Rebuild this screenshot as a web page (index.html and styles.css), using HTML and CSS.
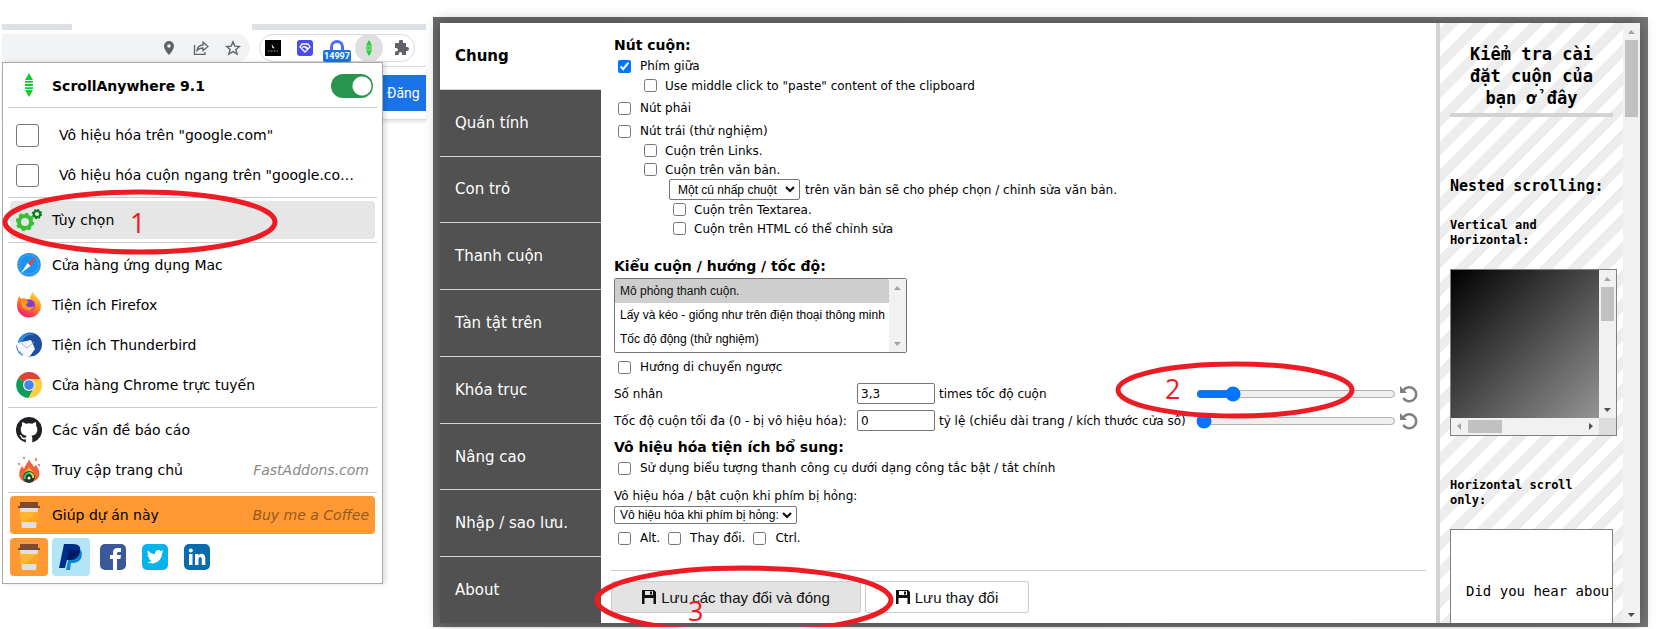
FILE: index.html
```html
<!DOCTYPE html>
<html lang="vi">
<head>
    <meta charset="UTF-8">
    <meta name="viewport" content="width=device-width, initial-scale=1.0">
    <title>ScrollAnywhere</title>
    <link rel="stylesheet" href="styles.css">
</head>
<body>
    <div class="browser">
        <div class="tab-strip"></div>
        <div class="toolbar">
            <div class="address-bar">
                <svg width="16" height="16" viewBox="0 0 16 16"><path fill="#5f6368" fill-rule="evenodd" d="M8 1a5 5 0 0 0-5 5c0 3.700 5 9 5 9s5-5.300 5-9a5 5 0 0 0-5-5zm0 3.200a1.800 1.800 0 1 1 0 3.600 1.800 1.800 0 0 1 0-3.600z"/></svg>
                <svg width="16" height="16" viewBox="0 0 16 16" fill="none" stroke="#5f6368" stroke-width="1.300"><path d="M1.500 5v9.300H12V12M4 10.500C4.500 7 6.500 5.200 10 5V2.200L15 6.500l-5 4.200V8C7.500 8 5.500 8.800 4 10.500z"/></svg>
                <svg width="16" height="16" viewBox="0 0 16 16" fill="none" stroke="#5f6368" stroke-width="1.400"><path d="M8 1.800l1.800 4.300 4.600.4-3.500 3 1.100 4.600L8 11.600l-4 2.500 1.100-4.600-3.500-3 4.600-.4z"/></svg>
            </div>
            <div class="extensions">
                <svg width="16" height="16" viewBox="0 0 16 16"><path d="M0 0h16v16H0z"/><path fill="#fff" d="M6.500 4l3.200 4.500-2.200-.5z"/><path stroke="#999" stroke-dasharray="1 .5" d="M3 11h10"/></svg>
                <svg width="16" height="16" viewBox="0 0 16 16"><rect width="16" height="16" rx="3" fill="#4b4de8"/><path fill="none" stroke="#fff" stroke-width="1.300" d="M5 4h6l2 3-5 5-5-5zM5 7.500l2-1 3.500 2.500M8 6.500l3 2"/></svg>
                <span class="counter">
                    <svg width="16" height="16" viewBox="0 0 16 16"><path fill="none" stroke="#4b6bfb" stroke-width="3" d="M2.500 10V7a5.500 5.500 0 0 1 11 0v3"/></svg>
                    <span class="badge">14997</span>
                </span>
                <span class="ext-active"><svg width="10" height="16" viewBox="0 0 10 24"><use href="#arrows"/></svg></span>
                <svg width="16" height="16" viewBox="0 0 16 16"><path fill="#5f6368" d="M6 1.500a2 2 0 0 1 4 0V3h3v4h1a2 2 0 0 1 0 4h-1v4H9v-1.500a1.600 1.600 0 0 0-3.200 0V15H2v-3.500h1.200a1.700 1.700 0 0 0 0-3.400H2V3h4z"/></svg>
            </div>
        </div>
        <div class="web-page"><a class="sign-in" href="#">Đăng</a></div>

        <div class="popup">
            <div class="popup-header">
                <svg class="icon" viewBox="-8 0 26 26"><g id="arrows" fill="#12cd2a"><path d="M5 0l4 7H1zM5 24l4-7H1zM1 8h8v1.800H1zM1 11h8v2H1zM1 14.200h8V16H1z"/></g></svg>
                <label for="enabled">ScrollAnywhere 9.1</label>
                <input class="switch" type="checkbox" id="enabled" checked>
            </div>
            <hr>
            <label class="item item-check first"><input type="checkbox"><span>Vô hiệu hóa trên "google.com"</span></label>
            <label class="item item-check"><input type="checkbox"><span>Vô hiệu hóa cuộn ngang trên "google.co…</span></label>
            <hr>
            <a class="item hover" href="#">
                <svg class="icon" viewBox="0 0 26 26"><circle cx="9" cy="15" r="6" fill="none" stroke="#35c135" stroke-width="4"/><circle cx="9" cy="15" r="8" fill="none" stroke="#35c135" stroke-width="2.500" stroke-dasharray="3.200 3.080"/><circle cx="21" cy="7" r="3.200" fill="none" stroke="#0c7d1d" stroke-width="2.200"/><circle cx="21" cy="7" r="4.400" fill="none" stroke="#0c7d1d" stroke-width="1.500" stroke-dasharray="1.800 1.650"/></svg>
                <span>Tùy chọn</span>
            </a>
            <hr>
            <a class="item" href="#">
                <svg class="icon" viewBox="0 0 26 26"><circle cx="13" cy="13" r="12" fill="#b9bcc0"/><circle cx="13" cy="12.500" r="11.500" fill="#1a94f0"/><circle cx="13" cy="12.500" r="9.500" fill="none" stroke="#7fd0ff" stroke-dasharray="1 1.500"/><path fill="#e8453c" d="M21 4l-6.500 10-3-3z"/><path fill="#fff" d="M5 21l6.500-10 3 3z"/></svg>
                <span>Cửa hàng ứng dụng Mac</span>
            </a>
            <a class="item" href="#">
                <svg class="icon" viewBox="0 0 26 26"><defs><linearGradient id="fox" x1="0.8" y1="0" x2="0.3" y2="1"><stop offset="0" stop-color="#ffe13f"/><stop offset=".45" stop-color="#ff8a1f"/><stop offset="1" stop-color="#f5156c"/></linearGradient></defs><path fill="url(#fox)" d="M3 4l2 3 3-1 2 1 4 0c0-3 1-5 3-7 1 4 7 6 8 13a12 12 0 0 1-24 1C1 10 2 7 3 4z"/><circle cx="13.500" cy="13" r="5.500" fill="#7a3fd8"/><path fill="#ff9a1f" d="M5 9c3-1 6 0 8 1l-3 2c0 4 5 4 8 2-2 7-13 6-13-5z"/></svg>
                <span>Tiện ích Firefox</span>
            </a>
            <a class="item" href="#">
                <svg class="icon" viewBox="0 0 26 26"><circle cx="14" cy="12.500" r="12" fill="#1c4fa0"/><path fill="#2b8ee0" d="M2 11C3 3 12-1 19 3c-7-1-12 2-13 8z"/><path fill="#f4f6fa" d="M1 11l14-3 4 9-5 7c-6 2-13-3-13-13z"/><path fill="none" stroke="#a9b8cc" d="M5 11l6 5 7-6"/><path fill="#3b7dd8" d="M0 12c0 7 3 10 7 12l-1-3-1 1-1-3-1 1z"/></svg>
                <span>Tiện ích Thunderbird</span>
            </a>
            <a class="item" href="#">
                <svg class="icon" viewBox="0 0 26 26"><path fill="#db4437" d="M13 13L2.200 6A13 13 0 0 1 24.600 7H13z"/><path fill="#0f9d58" d="M13 13L2.200 6A13 13 0 0 0 12.500 26L18 16z"/><path fill="#ffcd40" d="M13 13V7h11.600A13 13 0 0 1 12.500 26L18 16z"/><circle cx="13" cy="13" r="6" fill="#f1f1f1"/><circle cx="13" cy="13" r="4.800" fill="#4285f4"/></svg>
                <span>Cửa hàng Chrome trực tuyến</span>
            </a>
            <hr>
            <a class="item" href="#">
                <svg class="icon" viewBox="0 0 16 16"><path fill="#1f2023" d="M8 0a8 8 0 0 0-2.530 15.590c.4.070.55-.17.55-.38v-1.490c-2.010.37-2.530-.49-2.690-.94-.09-.23-.48-.94-.82-1.130-.28-.15-.68-.52-.01-.53.63-.01 1.080.58 1.230.82.72 1.210 1.870.87 2.330.66.070-.52.280-.87.510-1.070-1.780-.2-3.640-.89-3.640-3.950 0-.87.310-1.590.820-2.150-.08-.2-.36-1.020.080-2.120 0 0 .67-.21 2.200.82a7.400 7.400 0 0 1 4 0c1.530-1.040 2.200-.82 2.200-.82.44 1.100.16 1.920.080 2.120.51.560.82 1.270.82 2.150 0 3.070-1.870 3.750-3.650 3.950.29.250.54.730.54 1.480v2.200c0 .21.150.46.550.38A8 8 0 0 0 8 0z"/></svg>
                <span>Các vấn đề báo cáo</span>
            </a>
            <a class="item" href="#">
                <svg class="icon" viewBox="0 0 26 26"><path fill="#f0623a" d="M13 2c1 4 4 5 5 8l2-2c3 5 5 9 2 13-3 5-15 6-18 0-2-4 0-9 2-12l2 3c1-4 4-6 5-10z"/><path fill="#ffb43d" d="M13 10c3 4 7 6 6 11H7c-1-5 4-7 6-11z"/><path stroke="#f0623a" stroke-width="1.500" d="M8 0v2M20 1v3M3 6v2M23 7v2"/><circle cx="13" cy="20" r="6" fill="#24382f"/><path fill="none" stroke="#27d06a" stroke-width="2" d="M9 22a4.500 4.500 0 0 1 5-6"/><path fill="none" stroke="#e8d23a" stroke-width="2" d="M14 16a4.500 4.500 0 0 1 3 5"/><circle cx="13" cy="21" r="1.500" fill="#fff"/></svg>
                <span>Truy cập trang chủ</span><em>FastAddons.com</em>
            </a>
            <hr>
            <a class="item donate" href="#">
                <svg class="icon" viewBox="0 0 26 26"><g id="cup"><path fill="#7b4a33" d="M4 0h18v4h2v2H2V4h2z"/><path fill="#e0e0e0" d="M4 6h18l-2 20H6z"/><path fill="#ffb62e" d="M4 10h18l-1 10H5z"/><path fill="#ffa424" d="M22 10L8 20h13z"/></g></svg>
                <span>Giúp dự án này</span><em>Buy me a Coffee</em>
            </a>
            <div class="social">
                <a class="coffee" href="#" aria-label="Coffee"><svg class="icon" viewBox="0 0 26 26"><use href="#cup"/></svg></a>
                <a class="paypal" href="#" aria-label="PayPal"><svg class="icon" viewBox="0 0 26 26"><path fill="#0f85d0" d="M8 26l3-14 12-6c3 8-2 13-8 13h-2l-1 7z"/><path fill="#002c8a" d="M6 0h9c6 0 8 3 7 7s-4 9-10 9H9l-2 8H1z"/><path fill="#001b66" d="M11 6h11c0 6-4 10-10 10H9z"/></svg></a>
                <a href="#" aria-label="Facebook"><svg class="icon" viewBox="0 0 26 26"><rect width="26" height="26" rx="5" fill="#3b5998"/><path fill="#fff" d="M13 26V15h-3v-4h3V9c0-4 2-5 5-5h3v4h-2c-1.500 0-2 .5-2 2v1h4l-.6 4H17v11z"/></svg></a>
                <a href="#" aria-label="Twitter"><svg class="icon" viewBox="0 0 26 26"><rect width="26" height="26" rx="5" fill="#08b3ec"/><path fill="#fff" d="M5 18c2 .2 3.500-.3 5-1.300-1.700-.2-2.700-1-3.200-2.400h1.400C6.500 13.800 5.600 12.500 5.500 11l1.500.4C5.400 10 5 8.300 6 6.600c2 2.300 4.200 3.500 7 3.700-.5-4 3.500-5.600 6-3.400L21.200 6l-1.300 2 1.800-.5L20 9.300C20 17 12 22 5 18z"/></svg></a>
                <a href="#" aria-label="LinkedIn"><svg class="icon" viewBox="0 0 26 26"><rect width="26" height="26" rx="5" fill="#0a6cac"/><path fill="#fff" d="M5 10h3.500v11H5zM11 10h3.300v1.600c2-3 7-2.200 7 2.600V21h-3.500v-6c0-3-3.300-2.700-3.300.2V21H11z"/><circle cx="6.800" cy="6.500" r="2" fill="#fff"/></svg></a>
            </div>
        </div>
    </div>

    <div class="backdrop">
        <div class="options">
            <nav class="tabs">
                <a class="active" href="#">Chung</a>
                <a href="#">Quán tính</a>
                <a href="#">Con trỏ</a>
                <a href="#">Thanh cuộn</a>
                <a href="#">Tàn tật trên</a>
                <a href="#">Khóa trục</a>
                <a href="#">Nâng cao</a>
                <a href="#">Nhập / sao lưu.</a>
                <a href="#">About</a>
            </nav>

            <main class="settings">
                <h2>Nút cuộn:</h2>
                <div class="group">
                    <label class="row"><input type="checkbox" checked>Phím giữa</label>
                    <label class="row sub"><input type="checkbox">Use middle click to "paste" content of the clipboard</label>
                </div>
                <div class="group">
                    <label class="row"><input type="checkbox">Nút phải</label>
                </div>
                <div class="group">
                    <label class="row"><input type="checkbox">Nút trái (thử nghiệm)</label>
                    <label class="row sub"><input type="checkbox">Cuộn trên Links.</label>
                    <label class="row sub"><input type="checkbox">Cuộn trên văn bản.</label>
                    <div class="click-row">
                        <span class="dropdown"><select id="clicks"><option>Một cú nhấp chuột</option></select><svg width="10" height="7" viewBox="0 0 10 7"><use href="#chevron"/></svg></span>
                        <label for="clicks">trên văn bản sẽ cho phép chọn / chỉnh sửa văn bản.</label>
                    </div>
                    <label class="row sub sub-2"><input type="checkbox">Cuộn trên Textarea.</label>
                    <label class="row sub sub-2"><input type="checkbox">Cuộn trên HTML có thể chỉnh sửa</label>
                </div>

                <h2 class="spaced">Kiểu cuộn / hướng / tốc độ:</h2>
                <div class="list-box">
                    <select size="3" aria-label="Kiểu cuộn">
                        <option selected>Mô phỏng thanh cuộn.</option>
                        <option>Lấy và kéo - giống như trên điện thoại thông minh</option>
                        <option>Tốc độ động (thử nghiệm)</option>
                    </select>
                    <div class="scrollbar disabled"><i class="up"></i><i class="down"></i></div>
                </div>
                <label class="row reverse"><input type="checkbox">Hướng di chuyển ngược</label>
                <div class="speed">
                    <label for="multiplier">Số nhân</label>
                    <input type="text" id="multiplier" value="3,3">
                    <span>times tốc độ cuộn</span>
                    <input type="range" min="0" max="100" value="16" aria-label="Số nhân">
                    <button class="reset" aria-label="Reset"><svg width="18" height="18" viewBox="0 0 18 18"><g id="undo"><path fill="none" stroke="#808080" stroke-width="2.600" d="M3.500 5.200A7 7 0 1 1 3.300 13"/><path fill="#808080" d="M0 1v7h7z"/></g></svg></button>
                </div>
                <div class="speed">
                    <label for="maximum">Tốc độ cuộn tối đa (0 - bị vô hiệu hóa):</label>
                    <input type="text" id="maximum" value="0">
                    <span>tỷ lệ (chiều dài trang / kích thước cửa sổ)</span>
                    <input type="range" min="0" max="100" value="0" aria-label="Tốc độ cuộn tối đa">
                    <button class="reset" aria-label="Reset"><svg width="18" height="18" viewBox="0 0 18 18"><use href="#undo"/></svg></button>
                </div>

                <h2>Vô hiệu hóa tiện ích bổ sung:</h2>
                <label class="row"><input type="checkbox">Sử dụng biểu tượng thanh công cụ dưới dạng công tắc bật / tắt chính</label>
                <label class="caption" for="hold">Vô hiệu hóa / bật cuộn khi phím bị hỏng:</label>
                <span class="dropdown compact"><select id="hold"><option>Vô hiệu hóa khi phím bị hỏng:</option></select><svg width="10" height="7" viewBox="0 0 10 7"><path id="chevron" fill="none" stroke="#111" stroke-width="2.200" d="M1 1l4 4 4-4"/></svg></span>
                <div class="keys">
                    <label class="row"><input type="checkbox">Alt.</label>
                    <label class="row"><input type="checkbox">Thay đổi.</label>
                    <label class="row"><input type="checkbox">Ctrl.</label>
                </div>

                <footer>
                    <button class="save primary"><svg width="14" height="14" viewBox="0 0 14 14"><g id="disk"><path fill="#111" fill-rule="evenodd" d="M0 0h12l2 2v12H0zM3 1v4h8V1zM2.500 8v6h9V8z"/><path fill="#111" d="M8 1.500h2v3H8z"/></g></svg>Lưu các thay đổi và đóng</button>
                    <button class="save"><svg width="14" height="14" viewBox="0 0 14 14"><use href="#disk"/></svg>Lưu thay đổi</button>
                </footer>
            </main>

            <aside class="playground">
                <div class="stripes">
                    <h1>Kiểm tra cài đặt cuộn của bạn ở đây</h1>
                    <h3>Nested scrolling:</h3>
                    <h4>Vertical and Horizontal:</h4>
                    <div class="both-ways">
                        <div class="gradient"></div>
                        <div class="scrollbar"><i class="up"></i><b></b><i class="down live"></i></div>
                        <div class="scrollbar horizontal"><i class="left"></i><b></b><i class="right live"></i></div>
                        <div class="corner"></div>
                    </div>
                    <h4>Horizontal scroll only:</h4>
                    <div class="joke">Did you hear about</div>
                </div>
                <div class="scrollbar page-scroll"><i class="up"></i><b></b><i class="down live"></i></div>
            </aside>
        </div>

        <!-- step 3 is cut off by the bottom of the window -->
        <svg class="mark mark-3" width="300" height="62" viewBox="0 0 300 62"><ellipse cx="150" cy="35" rx="147" ry="32"/><text x="94" y="56">3</text></svg>
    </div>

    <svg class="mark mark-1" width="276" height="66" viewBox="0 0 276 66"><ellipse cx="138" cy="33" rx="135" ry="30"/><text x="128" y="44">1</text></svg>
    <svg class="mark mark-2" width="240" height="58" viewBox="0 0 240 58"><ellipse cx="120" cy="29" rx="117" ry="26"/><text x="50" y="38">2</text></svg>
</body>
</html>
```
FILE: styles.css
```css
:root {
    --line: #ccc;
    --tab-background: #515151;
    --track: #f1f1f1;
    --thumb: #c1c1c1;
    --mark: #ed1c24;
}
* {
    box-sizing: border-box;
}
body {
    font-family: Verdana, "DejaVu Sans", sans-serif;
    font-size: 12px;
    margin: 0;
    color: #000;
    background-color: #fff;
    display: flex;
    gap: 7px;
    padding: 17px 8px 2px 2px;
    min-height: 100vh;
    position: relative;
    overflow: hidden;
}
a {
    color: inherit;
    text-decoration: none;
}
button {
    cursor: pointer;
}

/* browser window */
.browser {
    flex: none;
    width: 424px;
    padding-top: 7px;
    position: relative;
}
.tab-strip {
    height: 6px;
    background: linear-gradient(to right, #dee1e6 70px, #fff 70px, #fff 250px, #dee1e6 250px);
}
.toolbar {
    display: flex;
    align-items: flex-start;
    gap: 9px;
    padding-top: 4px;
    height: 37px;
    border-bottom: 1px solid #dadce0;
}
.address-bar {
    width: 248px;
    height: 28px;
    display: flex;
    justify-content: flex-end;
    align-items: center;
    gap: 16px;
    padding-right: 9px;
    border-radius: 0 14px 14px 0;
    background-color: #f1f3f4;
}
.extensions {
    display: flex;
    align-items: center;
    gap: 16px;
    height: 28px;
    padding: 0 5px;
    border: 1px solid #dadce0;
    border-radius: 14px;
}
.counter {
    position: relative;
    height: 16px;
}
.badge {
    position: absolute;
    top: 10px;
    left: -6px;
    width: 28px;
    height: 12px;
    border-radius: 2px;
    background-color: #1a73e8;
    color: #fff;
    font: bold 9px/12px Roboto, sans-serif;
    text-align: center;
}
.ext-active {
    width: 28px;
    height: 28px;
    margin: 0 -6px;
    display: flex;
    justify-content: center;
    align-items: center;
    border-radius: 50%;
    background-color: #dfdfdf;
}
.web-page {
    display: flex;
    justify-content: flex-end;
    padding: 8px 0;
    border-bottom: 1px solid #dadce0;
    box-shadow: 0 2px 3px rgba(0, 0, 0, 0.1);
}
.sign-in {
    width: 44px;
    padding-left: 5px;
    background-color: #1a73e8;
    color: #fff;
    font: 14px/36px Roboto, sans-serif;
}

/* extension popup */
.popup {
    position: absolute;
    top: 45px;
    left: 0;
    width: 381px;
    padding: 0 5px 7px;
    border: 1px solid #aaa;
    background-color: #fff;
    box-shadow: 3px 0 4px rgba(0, 0, 0, 0.12);
    font-size: 14px;
}
.popup hr {
    height: 1px;
    margin: 3px 0;
    border: none;
    background-color: var(--line);
}
.popup-header {
    height: 41px;
    display: flex;
    align-items: center;
    gap: 10px;
    padding: 4px 4px 0 8px;
}
.popup-header label {
    flex: 1;
    font-weight: bold;
}
.icon {
    flex: none;
    width: 26px;
    height: 26px;
}
.switch {
    appearance: none;
    width: 42px;
    height: 24px;
    margin: 0;
    border-radius: 12px;
    background: radial-gradient(circle at 31px 12px, #fff 9px, #27964c 10px);
}
.item {
    display: flex;
    align-items: center;
    gap: 10px;
    height: 38px;
    margin: 0 2px 2px;
    padding: 0 6px;
    border-radius: 4px;
    white-space: nowrap;
}
.item.first {
    margin-top: 8px;
}
.item.hover {
    background-color: #e6e6e6;
}
.item-check {
    gap: 20px;
}
.item-check input {
    appearance: none;
    width: 23px;
    height: 23px;
    margin: 0;
    border: 1px solid #767676;
    border-radius: 3px;
}
.item em {
    margin-left: auto;
    color: #888;
}
.item.donate {
    margin-bottom: 4px;
    background-color: #ff9933;
}
.item.donate em {
    color: #96591d;
}
.social {
    display: flex;
    gap: 4px;
    padding-left: 2px;
}
.social a {
    padding: 6px;
    height: 38px;
    border-radius: 4px;
}
.social .coffee {
    background-color: #ff9933;
}
.social .paypal {
    background-color: #b3e5f7;
}

/* options window */
.backdrop {
    flex: 1;
    min-width: 0;
    display: flex;
    padding: 6px 8px 4px 7px;
    position: relative;
    background: linear-gradient(to right, #6c6c6c, #777);
}
.options {
    flex: 1;
    min-width: 0;
    display: flex;
    background-color: #fff;
    box-shadow: 0 0 14px rgba(0, 0, 0, 0.4);
}
.tabs {
    flex: none;
    width: 161px;
    display: flex;
    flex-direction: column;
    background-color: var(--tab-background);
    color: #fff;
    font-size: 15px;
}
.tabs a {
    flex: 1;
    display: flex;
    align-items: center;
    padding-left: 15px;
    border-bottom: 1px solid #d3d3d3;
}
.tabs a:last-child {
    border-bottom: none;
}
.tabs .active {
    background-color: #fff;
    color: #000;
    font-weight: bold;
}
.settings {
    flex: 1;
    min-width: 0;
    display: flex;
    flex-direction: column;
    padding: 12px 10px 10px 13px;
    white-space: nowrap;
}
h2 {
    margin: 0;
    font-size: 14px;
    line-height: 21px;
}
h2.spaced {
    margin-top: 15px;
    margin-bottom: 1px;
}
.group {
    margin-bottom: 3px;
}
.row {
    display: flex;
    align-items: center;
    gap: 9px;
    height: 20px;
    padding-left: 4px;
}
.row input {
    width: 13px;
    height: 13px;
    margin: 0;
}
.row.sub {
    height: 19px;
    gap: 8px;
    padding-left: 30px;
}
.row.sub-2 {
    padding-left: 59px;
}
.click-row {
    display: flex;
    align-items: center;
    gap: 5px;
    padding-left: 55px;
}
.dropdown {
    display: flex;
    align-items: center;
    align-self: flex-start;
    width: 131px;
    height: 21px;
    padding: 0 4px 0 8px;
    border: 1px solid #767676;
    border-radius: 2px;
}
.dropdown select {
    appearance: none;
    flex: 1;
    min-width: 0;
    padding: 0;
    border: none;
    background: none;
    color: #000;
    font: 12px "Liberation Sans", Arial, sans-serif;
}
.dropdown.compact {
    width: 183px;
    height: 18px;
    padding-left: 5px;
}
.list-box {
    display: flex;
    align-self: flex-start;
    width: 293px;
    height: 75px;
    border: 1px solid #767676;
    border-radius: 2px;
}
.list-box select {
    flex: 1;
    min-width: 0;
    padding: 0;
    border: none;
    overflow: hidden;
    font: 12px "Liberation Sans", Arial, sans-serif;
}
.list-box option {
    height: 24px;
    padding: 5px;
    line-height: 14px;
}
.row.reverse {
    margin: 4px 0 3px;
}
.speed {
    display: grid;
    grid-template-columns: 239px 78px 1fr 200px 18px;
    column-gap: 4px;
    align-items: center;
    height: 27px;
    padding-right: 8px;
}
.speed input[type="text"] {
    width: 78px;
    height: 21px;
    padding: 1px 3px;
    border: 1px solid #767676;
    border-radius: 2px;
    font: inherit;
}
.speed input[type="range"] {
    width: 200px;
    margin: 0;
}
.reset {
    width: 18px;
    height: 18px;
    padding: 0;
    border: none;
    background: none;
}
.speed + h2 {
    margin-top: 3px;
}
.caption {
    margin-top: 8px;
    line-height: 20px;
}
.keys {
    display: flex;
    gap: 4px;
    margin-top: 4px;
}
footer {
    display: flex;
    gap: 4px;
    margin-top: auto;
    margin-left: -3px;
    padding-top: 10px;
    border-top: 1px solid var(--line);
}
.save {
    display: flex;
    justify-content: center;
    align-items: center;
    gap: 5px;
    width: 164px;
    height: 32px;
    padding: 0;
    border: 1px solid var(--line);
    border-radius: 3px;
    background-color: #fff;
    color: #111;
    font: 15px "Liberation Sans", Arial, sans-serif;
}
.save.primary {
    width: 250px;
    background-color: #e3e3e3;
}

/* scroll playground */
.playground {
    flex: none;
    width: 204px;
    display: flex;
    border-left: 4px solid #d3d3d3;
    font-family: Consolas, "DejaVu Sans Mono", monospace;
}
.stripes {
    flex: 1;
    min-width: 0;
    height: 0;
    min-height: 100%;
    padding: 20px 10px 0;
    overflow: hidden;
    background: repeating-linear-gradient(-45deg, #ededed, #ededed 10px, #fff 10px, #fff 20px);
}
.stripes h1 {
    margin: 0 0 58px;
    padding-bottom: 4px;
    border-bottom: 4px solid #d3d3d3;
    font-size: 17px;
    line-height: 22px;
    text-align: center;
}
.stripes h3 {
    margin: 0 0 21px;
    font-size: 15px;
    line-height: 22px;
}
.stripes h4 {
    margin: 0 0 21px;
    font-size: 12px;
    line-height: 15px;
}
.both-ways {
    display: grid;
    grid-template-columns: 148px 17px;
    grid-template-rows: 148px 17px;
    width: 167px;
    margin-bottom: 42px;
    border: 1px solid #808080;
}
.gradient {
    background: linear-gradient(135deg, #000, #949494);
}
.corner {
    background-color: #dcdcdc;
}
.joke {
    height: 160px;
    padding: 52px 0 0 15px;
    border: 1px solid #808080;
    background-color: #fff;
    overflow: hidden;
    white-space: nowrap;
    font-size: 14px;
    line-height: 18px;
}
.scrollbar {
    flex: none;
    width: 17px;
    display: flex;
    flex-direction: column;
    align-items: center;
    background-color: var(--track);
}
.scrollbar b {
    width: 13px;
    height: 34px;
    background-color: var(--thumb);
}
.scrollbar i {
    width: 17px;
    height: 17px;
    background-color: #a3a3a3;
    clip-path: polygon(5px 11px, 12px 11px, 8px 7px);
}
.scrollbar i.down {
    margin-top: auto;
    clip-path: polygon(5px 7px, 12px 7px, 8px 11px);
}
.scrollbar i.left {
    clip-path: polygon(10px 5px, 10px 12px, 6px 8px);
}
.scrollbar i.right {
    margin-left: auto;
    clip-path: polygon(7px 5px, 7px 12px, 11px 8px);
}
.scrollbar i.live {
    background-color: #505050;
}
.scrollbar.horizontal {
    width: auto;
    flex-direction: row;
}
.scrollbar.horizontal b {
    width: 34px;
    height: 13px;
}
.page-scroll b {
    height: 77px;
}

/* numbered steps drawn over the windows */
.mark {
    position: absolute;
    pointer-events: none;
    overflow: hidden;
    font: 27px "Open Sans", sans-serif;
}
.mark ellipse {
    fill: none;
    stroke: var(--mark);
    stroke-width: 5px;
}
.mark text {
    fill: var(--mark);
}
.mark-1 {
    top: 189px;
    left: 2px;
}
.mark-2 {
    top: 361px;
    right: 301px;
}
.mark-3 {
    bottom: 0;
    left: 161px;
}
```
